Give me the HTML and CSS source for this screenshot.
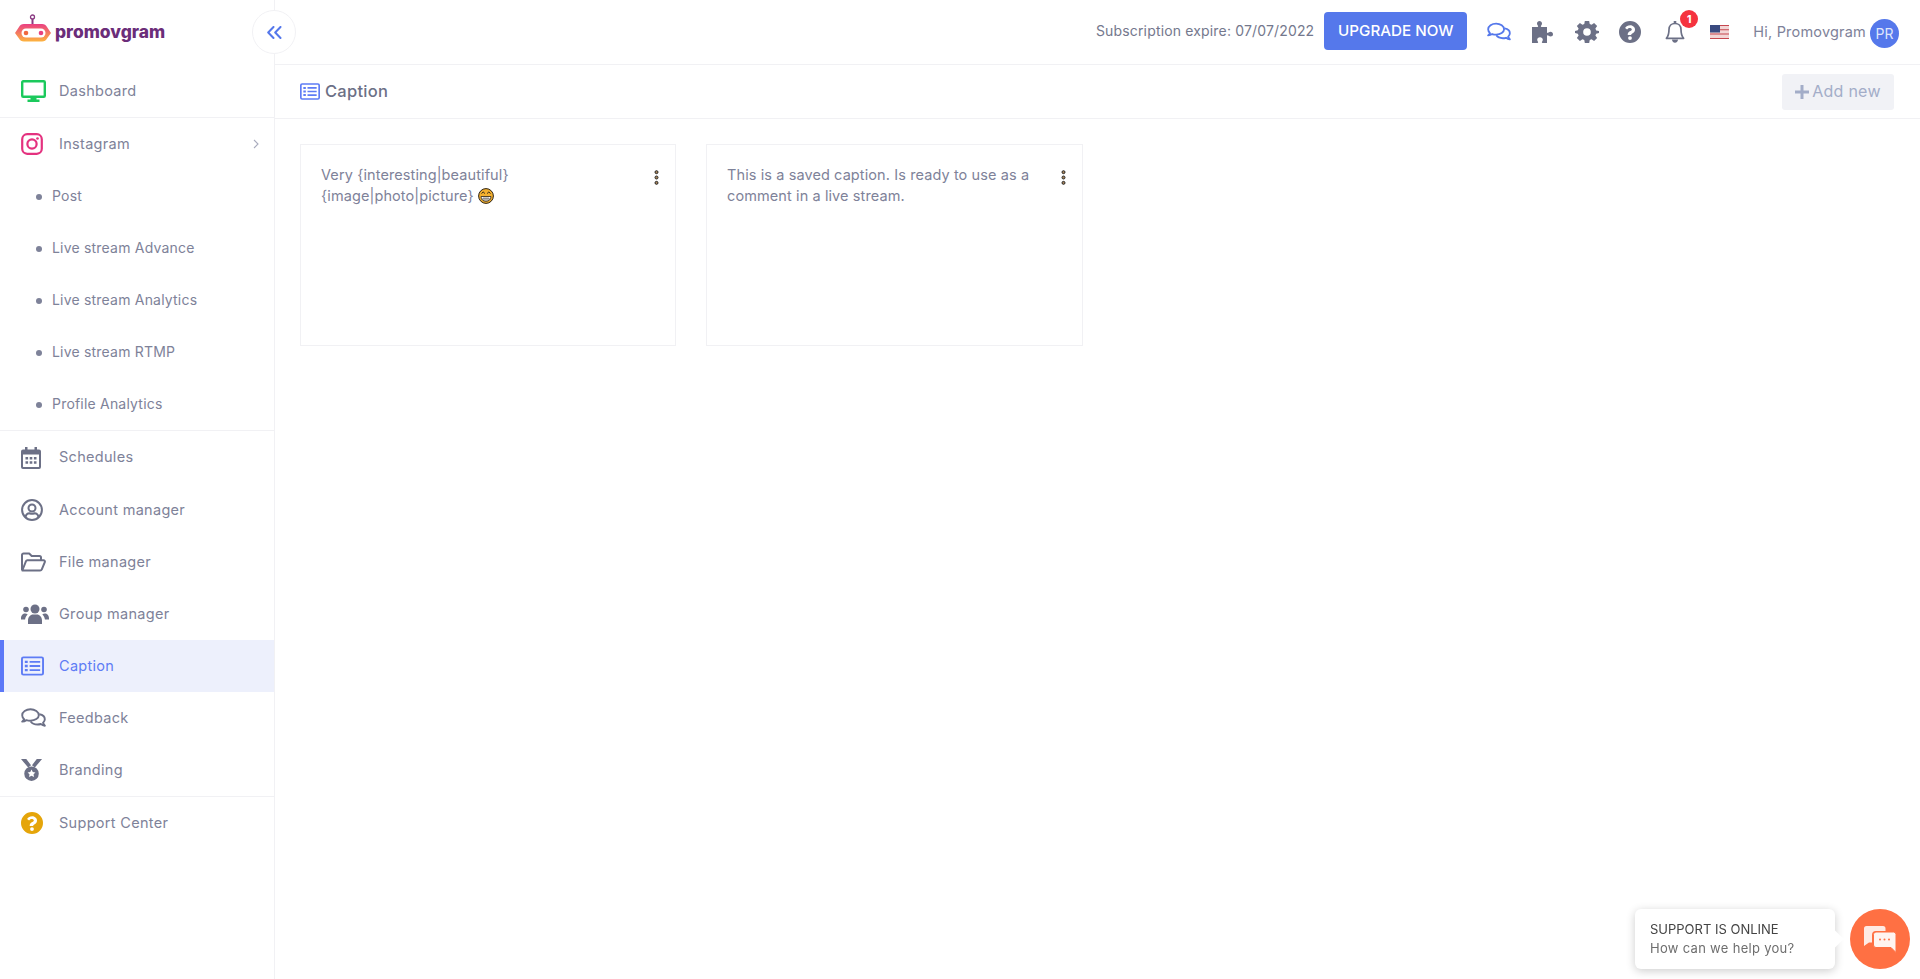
FILE: index.html
```html
<!DOCTYPE html>
<html lang="en">
<head>
<meta charset="utf-8">
<title>Caption - Promovgram</title>
<link rel="stylesheet" href="styles.css">
</head>
<body>
<svg class="defs" width="0" height="0" aria-hidden="true">
  <symbol id="i-list" viewBox="0 0 24 20" preserveAspectRatio="xMinYMid meet"><path fill="none" stroke="currentColor" stroke-width="2" d="M2.500 1h19A1.500 1.500 0 0 1 23 2.500v15a1.500 1.500 0 0 1-1.500 1.500h-19A1.500 1.500 0 0 1 1 17.500v-15A1.500 1.500 0 0 1 2.500 1z"/><path fill="currentColor" d="M4 4.500h3v2.400H4zM4 8.800h3v2.400H4zM4 13.100h3v2.400H4zM9 4.700h11v2H9zM9 9h11v2H9zM9 13.300h11v2H9z"/></symbol>
  <symbol id="i-chat" viewBox="0 0 25 20" preserveAspectRatio="xMinYMid meet"><path fill="none" stroke="currentColor" stroke-width="1.900" stroke-linejoin="round" d="M9.500 1.200c-4.500 0-8.300 2.600-8.300 6 0 1.500.7 2.800 1.900 3.900-.4 1-1.100 1.800-1.900 2.500 1.500-.1 3-.7 4.200-1.500 1.200.4 2.600.6 4.100.6 4.500 0 8.300-2.500 8.300-5.500s-3.800-6-8.300-6z"/><path fill="none" stroke="currentColor" stroke-width="1.900" stroke-linejoin="round" d="M18.400 6.300c3.200.6 5.400 2.600 5.400 5 0 1.300-.6 2.500-1.700 3.500.3.900.9 1.900 1.700 2.900-1.500-.2-2.900-.9-4-1.700-1 .3-2.100.5-3.200.5-3.100 0-5.700-1.200-6.900-3"/></symbol>
  <symbol id="i-help" viewBox="0 0 22 22" preserveAspectRatio="xMinYMid meet"><path fill="currentColor" fill-rule="evenodd" d="M11 0a11 11 0 1 1 0 22 11 11 0 0 1 0-22zm.2 4.300c-2.400 0-3.900 1-5.100 2.800l2 1.500c.7-.9 1.300-1.500 2.700-1.500 1 0 2 .6 2 1.400 0 .7-.5 1-1.500 1.600-1.200.7-2.600 1.500-2.600 3.400v.5h3.400c0-1.500 3.900-1.700 3.900-5.500 0-2.500-2.500-4.200-4.800-4.200zM11 15.200a1.900 1.900 0 1 0 0 3.800 1.900 1.900 0 0 0 0-3.800z"/></symbol>
</svg>

<div class="app">
  <aside class="sidebar">
    <div class="brand">
      <svg class="brand-mark" viewBox="0 0 37 29" aria-hidden="true">
        <defs><linearGradient id="robot" x1="0" y1="0" x2="0" y2="1"><stop offset="0" stop-color="#ea3f83"/><stop offset="1" stop-color="#fdb43f"/></linearGradient></defs>
        <circle cx="17.500" cy="3" r="2" fill="none" stroke="#8a3a82" stroke-width="1.300"/>
        <path d="M17.500 5v5" stroke="#8a3a82" stroke-width="2"/>
        <path fill="url(#robot)" d="M9 10h18c2.500 0 4 1 5 3l4 6-4 5.500c-1 2-2.500 3-5 3H9c-2.500 0-4-1-5-3L0 19l4-6c1-2 2.500-3 5-3z"/>
        <rect x="6.500" y="14.500" width="24" height="9" rx="4.500" fill="#fff"/>
        <circle cx="11" cy="19" r="2.300" fill="#f0683f"/><circle cx="26" cy="19" r="2.300" fill="#e8417f"/>
      </svg>
      <span class="brand-name">promovgram</span>
    </div>
    <nav class="nav">
      <div class="nav-group">
        <a class="nav-item"><svg class="nav-icon green" viewBox="0 0 25 22" preserveAspectRatio="xMinYMid meet"><path fill="none" stroke="currentColor" stroke-width="2.400" d="M2.200 1.200h20.600a1 1 0 0 1 1 1v13.600a1 1 0 0 1-1 1H2.200a1 1 0 0 1-1-1V2.200a1 1 0 0 1 1-1z"/><path fill="currentColor" d="M9.500 17h6v2.500h3V22H6.500v-2.500h3z"/></svg><span>Dashboard</span></a>
      </div>
      <div class="nav-group">
        <a class="nav-item"><svg class="nav-icon pink" viewBox="0 0 20 20" preserveAspectRatio="xMinYMid meet"><rect x="1.100" y="1.100" width="17.800" height="17.800" rx="4.500" fill="none" stroke="currentColor" stroke-width="2"/><circle cx="10" cy="10" r="4.200" fill="none" stroke="currentColor" stroke-width="2"/><circle cx="15" cy="5" r="1.200" fill="currentColor"/></svg><span>Instagram</span><svg class="caret" viewBox="0 0 6 10"><path d="M1 1l4 4-4 4" fill="none" stroke="currentColor" stroke-width="1.100"/></svg></a>
        <a class="nav-sub">Post</a>
        <a class="nav-sub">Live stream Advance</a>
        <a class="nav-sub">Live stream Analytics</a>
        <a class="nav-sub">Live stream RTMP</a>
        <a class="nav-sub">Profile Analytics</a>
      </div>
      <div class="nav-group">
        <a class="nav-item"><svg class="nav-icon" viewBox="0 0 20 22" preserveAspectRatio="xMinYMid meet"><path fill="currentColor" fill-rule="evenodd" d="M4 0h2.500v2.500h7V0H16v2.500h2a2 2 0 0 1 2 2V20a2 2 0 0 1-2 2H2a2 2 0 0 1-2-2V4.500a2 2 0 0 1 2-2h2zM2 7.500V19.500a.5.500 0 0 0 .5.500h15a.5.500 0 0 0 .5-.500V7.500z"/><path fill="currentColor" d="M4.500 10h2.600v2.600H4.500zM8.700 10h2.600v2.600H8.700zM12.900 10h2.600v2.600h-2.600zM4.500 14.200h2.600v2.600H4.500zM8.700 14.200h2.600v2.600H8.700zM12.900 14.200h2.600v2.600h-2.600z"/></svg><span>Schedules</span></a>
        <a class="nav-item"><svg class="nav-icon" viewBox="0 0 22 22" preserveAspectRatio="xMinYMid meet"><circle cx="11" cy="11" r="9.900" fill="none" stroke="currentColor" stroke-width="2"/><circle cx="11" cy="9" r="3.500" fill="none" stroke="currentColor" stroke-width="2"/><path d="M4.500 18c.5-2.500 2-3.800 4-3.800 1 .4 1.600.6 2.500.6s1.500-.2 2.500-.6c2 0 3.500 1.300 4 3.800" fill="none" stroke="currentColor" stroke-width="2"/></svg><span>Account manager</span></a>
        <a class="nav-item"><svg class="nav-icon" viewBox="0 0 25 20" preserveAspectRatio="xMinYMid meet"><path fill="none" stroke="currentColor" stroke-width="2" stroke-linejoin="round" d="M1 18V3a1.500 1.500 0 0 1 1.500-1.500h5.700l2.500 2.500h7.800A1.500 1.500 0 0 1 20 5.500V8"/><path fill="none" stroke="currentColor" stroke-width="2" stroke-linejoin="round" d="M1.300 18.500 5 9.200c.2-.6.700-1 1.400-1H22.500c1 0 1.700 1 1.300 1.900l-3 7.200c-.3.700-.9 1.200-1.700 1.200z"/></svg><span>File manager</span></a>
        <a class="nav-item"><svg class="nav-icon group-icon" viewBox="0 0 28 20" preserveAspectRatio="xMinYMid meet"><circle cx="14" cy="5" r="4.500" fill="currentColor"/><circle cx="5" cy="5.500" r="2.800" fill="currentColor"/><circle cx="23" cy="5.500" r="2.800" fill="currentColor"/><path fill="currentColor" d="M7 20v-3.500C7 13 9.500 10.500 12 10.500h4c2.500 0 5 2.500 5 6V20zM0 14.500C0 11 2 9.500 4 9.500c1 0 2 .3 2.700 1-1.400 1.200-2.400 3-2.600 5H0zM28 14.500c0-3.500-2-5-4-5-1 0-2 .3-2.700 1 1.400 1.200 2.400 3 2.600 5H28z"/></svg><span>Group manager</span></a>
        <a class="nav-item active"><svg class="nav-icon list-icon"><use href="#i-list"/></svg><span>Caption</span></a>
        <a class="nav-item"><svg class="nav-icon"><use href="#i-chat"/></svg><span>Feedback</span></a>
        <a class="nav-item"><svg class="nav-icon" viewBox="0 0 22 23" preserveAspectRatio="xMinYMid meet"><path fill="currentColor" d="M0 0h5.500l5 6.500-3 2.500zM22 0h-5.500l-5 6.500 3 2.500z"/><path fill="currentColor" fill-rule="evenodd" d="M11 7.800a7.600 7.600 0 1 1 0 15.200 7.600 7.600 0 0 1 0-15.200zm0 3.200 1.300 2.600 2.800.4-2 2 .5 2.800-2.600-1.400-2.600 1.400.5-2.800-2-2 2.800-.4z"/></svg><span>Branding</span></a>
      </div>
      <div class="nav-group">
        <a class="nav-item"><svg class="nav-icon amber"><use href="#i-help"/></svg><span>Support Center</span></a>
      </div>
    </nav>
  </aside>

  <main class="main">
    <header class="topbar">
      <span class="expire">Subscription expire: 07/07/2022</span>
      <a class="upgrade">UPGRADE NOW</a>
      <div class="tools">
        <svg class="tool blue"><use href="#i-chat"/></svg>
        <svg class="tool" viewBox="0 0 24 22"><path fill="currentColor" d="M1 6h5.500c.8 0 .8-.8.3-1.500C6.200 3.700 6 3 6 2.500 6 1 7.200 0 8.500 0S11 1 11 2.500c0 .5-.2 1.200-.8 2-.5.700-.5 1.500.3 1.500H16v5.300c0 .8.800.8 1.500.3.800-.6 1.500-.8 2-.8 1.500 0 2.500 1.100 2.500 2.400S21 15.500 19.500 15.500c-.5 0-1.200-.2-2-.8-.7-.5-1.500-.5-1.500.3V22h-4.500c-.8 0-.8-.8-.3-1.500.5-.7.600-1.200.6-1.800 0-1.400-1.200-2.500-2.800-2.500S6.200 17.300 6.200 18.700c0 .6.100 1.100.6 1.800.5.700.5 1.500-.3 1.500H1z"/></svg>
        <svg class="tool" viewBox="-1 0 22 20"><path fill="currentColor" fill-rule="evenodd" d="M8 0h4l.5 2.700 1.700.7 2.300-1.600 2.800 2.800-1.600 2.300.7 1.700L21 9v2l-2.600.5-.7 1.700 1.600 2.300-2.800 2.800-2.300-1.600-1.700.7L12 20H8l-.5-2.600-1.700-.7-2.300 1.600L.7 15.500l1.600-2.300-.7-1.700L-1 11V9l2.600-.5.7-1.700L.7 4.500l2.800-2.800 2.300 1.600 1.700-.7zM10 6.500a3.500 3.500 0 1 0 0 7 3.500 3.500 0 0 0 0-7z"/></svg>
        <svg class="tool help"><use href="#i-help"/></svg>
        <span class="bell-wrap">
          <svg class="tool" viewBox="0 0 20 22"><path fill="none" stroke="currentColor" stroke-width="1.700" stroke-linejoin="round" d="M10 2.500c-3.500 0-6 2.500-6 6 0 5-1 7-2.600 8.800h17.200C17 15.500 16 13.500 16 8.500c0-3.500-2.500-6-6-6z"/><path fill="currentColor" d="M8.700 0h2.600v2.800H8.700zM7 18.500h6c0 1.800-1.300 3.200-3 3.200s-3-1.400-3-3.200z"/></svg>
          <b class="badge">1</b>
        </span>
        <svg class="flag" viewBox="0 0 19 14"><rect width="19" height="14" fill="#f3d5d5"/><path fill="#c6474f" d="M0 0h19v1.100H0zM0 4.300h19v1H0zM0 8.600h19v1H0zM0 12.900h19V14H0z"/><rect width="10" height="7.500" fill="#3a4a80"/></svg>
      </div>
      <div class="user"><span class="user-name">Hi, Promovgram</span><span class="avatar">PR</span></div>
    </header>
    <div class="subheader">
      <h1 class="page-title"><svg class="title-icon"><use href="#i-list"/></svg>Caption</h1>
      <a class="add-new"><svg class="plus" viewBox="0 0 14 14"><path fill="currentColor" d="M5.500 0h3v5.500H14v3H8.500V14h-3V8.500H0v-3h5.500z"/></svg>Add new</a>
    </div>
    <section class="cards">
      <article class="card">
        <p>Very {interesting|beautiful} {image|photo|picture}<svg class="emoji" viewBox="0 0 16 16"><circle cx="8" cy="8" r="7.400" fill="#f4b02e" stroke="#2c2418" stroke-width="1"/><path d="M3 8.500h10c0 3-2.200 4.800-5 4.800S3 11.500 3 8.500z" fill="#fff" stroke="#2c2418" stroke-width=".8"/><path d="M3.500 10.800h9M6 8.500v4.500M8 8.500v4.800M10 8.500v4.500" stroke="#2c2418" stroke-width=".5"/><path d="M3.500 5.500 5.200 4l1.700 1.500M9.100 5.500 10.800 4l1.700 1.500" fill="none" stroke="#2c2418" stroke-width="1"/></svg></p>
        <svg class="kebab" viewBox="0 0 4 14"><circle cx="2" cy="2" r="1.400"/><circle cx="2" cy="7" r="1.400"/><circle cx="2" cy="12" r="1.400"/></svg>
      </article>
      <article class="card wide">
        <p>This is a saved caption. Is ready to use as a comment in a live stream.</p>
        <svg class="kebab" viewBox="0 0 4 14"><circle cx="2" cy="2" r="1.400"/><circle cx="2" cy="7" r="1.400"/><circle cx="2" cy="12" r="1.400"/></svg>
      </article>
    </section>
  </main>
</div>

<button class="collapse" aria-label="Collapse"><svg viewBox="0 0 15 13"><path d="M6.500 1 1.200 6.500 6.500 12M13.500 1 8.200 6.500 13.500 12" fill="none" stroke="currentColor" stroke-width="2" stroke-linecap="round" stroke-linejoin="round"/></svg></button>

<div class="support">
  <div class="support-bubble"><strong>SUPPORT IS ONLINE</strong><span>How can we help you?</span></div>
  <div class="support-btn"><svg viewBox="0 0 32 27"><path fill="#fff" fill-opacity=".85" d="M2.500 0H19a2.500 2.500 0 0 1 2.500 2.500V5H12a4 4 0 0 0-4 4v7.500H5L0 20V2.500A2.500 2.500 0 0 1 2.500 0z"/><path fill="#fff" fill-opacity=".92" stroke="#ff7043" stroke-width="1" d="M12 6h17.500A2.500 2.500 0 0 1 32 8.500V26.500L27 21.500H12A2.500 2.500 0 0 1 9.500 19V8.500A2.500 2.500 0 0 1 12 6z"/><circle cx="16" cy="13.500" r="1" fill="#ff7043"/><circle cx="20.500" cy="13.500" r="1" fill="#ff7043"/><circle cx="25" cy="13.500" r="1" fill="#ff7043"/></svg></div>
</div>
</body>
</html>
```
FILE: styles.css
```css
* { box-sizing: border-box; }
html, body { margin: 0; height: 100%; overflow: hidden; }
body { font-family: Inter, "Open Sans", "Liberation Sans", sans-serif; color: #74788d; background: #fff; }
.defs { position: absolute; }
.app { display: flex; height: 979px; }

.sidebar { width: 275px; flex: none; border-right: 1px solid #f1f1f4; display: flex; flex-direction: column; }
.brand { height: 65px; flex: none; display: flex; align-items: center; gap: 3px; padding: 0 0 3px 15px; }
.brand-mark { width: 37px; height: 29px; margin-top: -5px; }
.brand-name { font-size: 17.400px; font-weight: 800; color: #6b2d79; }
.nav { display: flex; flex-direction: column; }
.nav-group { border-bottom: 1px solid #f1f1f4; }
.nav-group:last-child { border-bottom: 0; }
.nav-item { height: 52px; display: flex; align-items: center; padding-left: 21px; font-size: 14.500px; letter-spacing: .3px; color: #7e8299; position: relative; }
.nav-item span { padding-bottom: 2px; }
.nav-group:nth-child(3) .nav-item:first-child { height: 53px; }
.nav-icon { width: 25px; height: 22px; flex: none; margin-right: 13px; color: #6c7086; }
.nav-icon.group-icon { width: 28px; height: 20px; margin-right: 10px; }
.nav-icon.list-icon { width: 23px; height: 20px; margin-right: 15px; }
.nav-icon.green { color: #1bc95c; }
.nav-icon.pink { color: #e4327f; }
.nav-icon.amber { color: #e5a50a; }
.caret { width: 6px; height: 10px; position: absolute; right: 15px; top: 21px; color: #a8abbd; }
.nav-item.active { background: #edf0fc; color: #5e7cf5; border-left: 4px solid #5c78f7; padding-left: 17px; }
.nav-item.active .nav-icon { color: #5e7cf5; }
.nav-sub { height: 52px; display: flex; align-items: center; padding: 0 0 2px 52px; font-size: 14px; letter-spacing: .2px; color: #7e8299; position: relative; }
.nav-sub::before { content: ""; position: absolute; left: 36px; top: 24px; width: 6px; height: 6px; border-radius: 50%; background: #7e8299; }

.main { flex: 1; min-width: 0; display: flex; flex-direction: column; }
.topbar { height: 65px; flex: none; border-bottom: 1px solid #f1f1f4; display: flex; align-items: center; padding: 0 21px 0 0; justify-content: flex-end; }
.expire { font-size: 14px; letter-spacing: .16px; color: #74788d; margin-right: 10px; margin-bottom: 4px; }
.upgrade { width: 143px; height: 38px; margin-bottom: 2px; padding-bottom: 1px; display: flex; align-items: center; justify-content: center; background: #5578eb; color: #fff; border-radius: 4px; font-size: 15.200px; font-weight: 500; }
.tools { display: flex; align-items: center; margin-left: 20px; color: #6c7086; }
.tool { width: 24px; height: 22px; flex: none; margin-right: 20px; }
.tool.blue { color: #5578eb; }
.bell-wrap { position: relative; display: flex; width: 24px; margin-right: 23px; }
.bell-wrap .tool { margin: 0; }
.badge { position: absolute; left: 17px; top: -11px; width: 18px; height: 18px; border-radius: 50%; background: #f5333f; color: #fff; font-size: 10px; font-weight: 800; display: flex; align-items: center; justify-content: center; }
.flag { width: 19px; height: 14px; flex: none; }
.user { display: flex; align-items: center; margin-left: 24px; margin-top: 3px; font-size: 14.500px; color: #7e8299; gap: 4px; }
.user-name { letter-spacing: .2px; padding-bottom: 4px; }
.avatar { width: 29px; height: 29px; border-radius: 50%; background: #5578eb; color: #dfe6fc; font-size: 14px; display: flex; align-items: center; justify-content: center; }

.subheader { height: 54px; flex: none; border-bottom: 1px solid #f1f1f4; display: flex; align-items: center; justify-content: space-between; padding: 0 26px 0 25px; }
.page-title { margin: 0; padding-bottom: 1px; font-size: 16.500px; letter-spacing: .25px; font-weight: 500; color: #6c7086; display: flex; align-items: center; gap: 5px; }
.title-icon { width: 20px; height: 17px; color: #5e7cf5; }
.add-new { width: 112px; height: 36px; padding-bottom: 2px; display: flex; align-items: center; justify-content: center; gap: 3px; background: #f1f2f6; border-radius: 3px; color: #a3adc8; font-size: 16px; letter-spacing: .25px; }
.plus { width: 14px; height: 14px; margin-top: 2px; }

.cards { display: flex; gap: 30px; padding: 25px 25px; align-items: flex-start; }
.card { width: 376px; height: 202px; border: 1px solid #f1f1f4; padding: 19px 16px 20px 20px; display: flex; justify-content: space-between; gap: 20px; }
.card.wide { width: 377px; }
.card p { margin: 0; font-size: 14.500px; letter-spacing: .1px; line-height: 21px; color: #7e8299; }
.emoji { width: 16px; height: 16px; vertical-align: -3px; margin-left: 4px; }
.kebab { width: 5px; height: 15px; flex: none; margin-top: 6px; fill: #a9855a; stroke: #222; stroke-width: .9; }

.collapse { position: fixed; left: 252px; top: 10px; width: 44px; height: 44px; padding: 0; border-radius: 50%; border: 1px solid #f1f1f4; background: #fff; color: #5578eb; display: flex; align-items: center; justify-content: center; }
.collapse svg { width: 15px; height: 13px; }

.support { position: fixed; right: 10px; bottom: 10px; display: flex; align-items: center; gap: 15px; }
.support-bubble { width: 200px; height: 60px; background: #fff; border-radius: 6px; box-shadow: 0 2px 10px rgba(0,0,0,.2); padding: 12px 15px; display: flex; flex-direction: column; gap: 3px; font-size: 13px; position: relative; }
.support-bubble::after { content: ""; position: absolute; right: -6px; top: 24px; width: 12px; height: 12px; background: #fff; transform: rotate(45deg); }
.support-bubble strong { font-weight: 400; color: #444; }
.support-bubble span { color: #6e6e6e; letter-spacing: .3px; }
.support-btn { width: 60px; height: 60px; border-radius: 50%; background: #ff7043; display: flex; align-items: center; justify-content: center; }
.support-btn svg { width: 32px; height: 27px; }
```
